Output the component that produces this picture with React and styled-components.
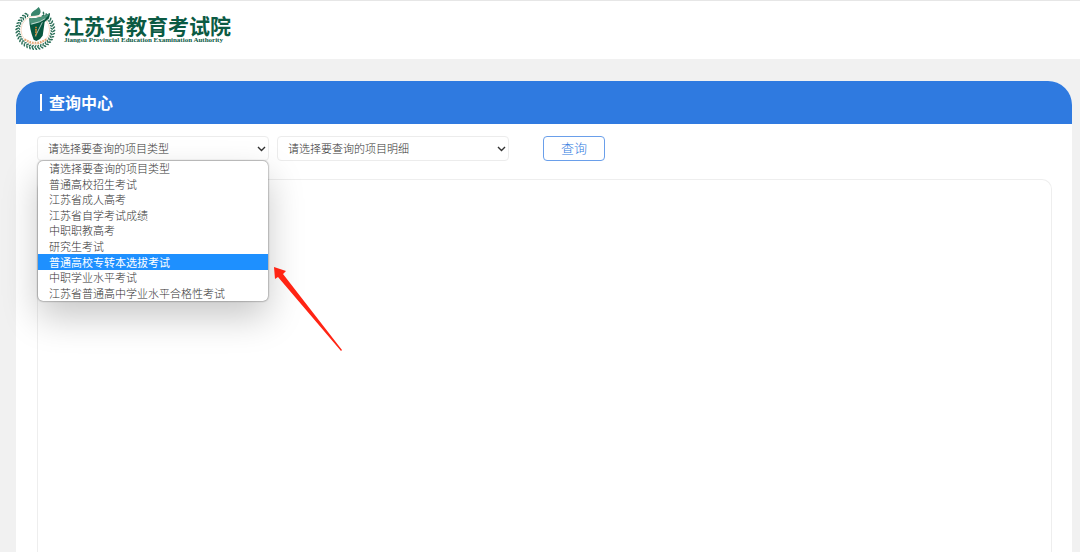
import React, { useState } from "react";
import styled, { createGlobalStyle } from "styled-components";

const GlobalStyle = createGlobalStyle`
  * {
    box-sizing: border-box;
  }

  body {
    margin: 0;
    background-color: #f1f1f1;
    font-family: "Noto Sans CJK SC", "Liberation Sans", sans-serif;
    font-weight: 300;
    color: #333;
  }
`;

const Page = styled.div`
  display: flex;
  flex-direction: column;
  min-height: 100vh;
`;

const Header = styled.header`
  display: flex;
  align-items: center;
  gap: 6px;
  height: 59px;
  padding: 0 15px 4px;
  border-top: 1px solid #e6e6e6;
  background-color: #fff;
`;

const Emblem = styled.svg`
  width: 42px;
  height: 44px;
`;

const Brand = styled.div`
  display: flex;
  flex-direction: column;
  padding-top: 2px;
  color: #0b5a43;
`;

const BrandName = styled.span`
  font-size: 21px;
  line-height: 22px;
  font-weight: 700;
`;

const BrandSub = styled.span`
  padding-left: 1px;
  font-family: "Liberation Serif", serif;
  font-size: 7px;
  line-height: 8px;
  font-weight: 700;
`;

const Panel = styled.main`
  flex: 1;
  display: flex;
  flex-direction: column;
  margin: 22px 8px 0 16px;
  border-radius: 24px 24px 0 0;
  background-color: #fff;
`;

const PanelHead = styled.div`
  display: flex;
  align-items: center;
  gap: 7px;
  height: 43px;
  padding: 0 24px;
  border-radius: 24px 24px 0 0;
  background-color: #2f7ae0;
  color: #fff;
`;

const Bar = styled.span`
  width: 2px;
  height: 17px;
  background-color: #fff;
`;

const Title = styled.h1`
  margin: 0;
  padding-bottom: 2px;
  font-size: 16px;
  line-height: 24px;
  font-weight: 700;
`;

const PanelBody = styled.div`
  flex: 1;
  display: flex;
  flex-direction: column;
  gap: 18px;
  padding: 12px 20px 0 21px;
`;

const Filters = styled.form`
  display: flex;
  gap: 8px;
`;

const Field = styled.div`
  position: relative;
  width: 232px;
`;

const Select = styled.select`
  display: block;
  appearance: none;
  width: 100%;
  height: 25px;
  padding: 0 24px 2px 10px;
  border: 1px solid #ececec;
  border-radius: 4px;
  background-color: #fff;
  color: #333;
  font-family: inherit;
  font-size: 11px;
  font-weight: 300;
  outline: none;
`;

const Chevron = styled.svg`
  position: absolute;
  top: 9px;
  right: 3px;
  width: 9px;
  height: 8px;
  pointer-events: none;
`;

const Options = styled.ul`
  position: absolute;
  z-index: 1;
  top: 25px;
  left: 1px;
  right: 1px;
  display: grid;
  grid-auto-rows: 1fr;
  height: 140px;
  margin: 0;
  padding: 0;
  overflow: hidden;
  list-style: none;
  border-radius: 5px;
  background-color: #fff;
  box-shadow: 0 0 2px rgba(0, 0, 0, 0.7), 0 16px 36px rgba(0, 0, 0, 0.22);
`;

const Option = styled.li`
  display: flex;
  align-items: center;
  padding: 0 11px;
  font-size: 11px;
  line-height: 15px;
  font-weight: ${(props) => (props.$active ? 400 : 300)};
  color: ${(props) => (props.$active ? "#fff" : "#333")};
  background-color: ${(props) => (props.$active ? "#1e90ff" : "transparent")};
  cursor: default;
`;

const Pointer = styled.svg`
  position: absolute;
  z-index: 2;
  top: 130px;
  left: 236px;
  width: 70px;
  height: 86px;
  pointer-events: none;
`;

const SearchButton = styled.button`
  width: 62px;
  height: 25px;
  margin-left: 26px;
  padding: 0 0 1px;
  border: 1px solid #6a9fea;
  border-radius: 4px;
  background-color: #fff;
  color: #2f7ae0;
  font-family: inherit;
  font-size: 13px;
  font-weight: 300;
  line-height: 22px;
  cursor: pointer;
`;

const Results = styled.section`
  flex: 1;
  border: 1px solid #eee;
  border-bottom: 0;
  border-radius: 10px 10px 0 0;
`;

const types = [
  "请选择要查询的项目类型",
  "普通高校招生考试",
  "江苏省成人高考",
  "江苏省自学考试成绩",
  "中职职教高考",
  "研究生考试",
  "普通高校专转本选拔考试",
  "中职学业水平考试",
  "江苏省普通高中学业水平合格性考试",
];

// wreath leaves run clockwise and leave the top open for the torch
const leaves = Array.from({ length: 33 }, (_, i) => -62 + i * 9.5);

const Logo = () => (
  <Emblem viewBox="0 0 126 132" aria-hidden="true">
    {leaves.map((a) => (
      <g key={a} transform={`rotate(${a} 61 72)`} fill="#2b7059">
        <ellipse cx="117" cy="70" rx="5" ry="2.4" transform="rotate(-38 117 70)" />
        <ellipse cx="110" cy="72" rx="5" ry="2.2" transform="rotate(38 110 72)" />
      </g>
    ))}
    <circle cx="61" cy="72" r="45" fill="#fff" />
    <circle cx="61" cy="72" r="43" fill="none" stroke="#edb78e" strokeWidth="1.5" />
    <path d="M29 100Q61 121 94 100" fill="none" stroke="#d9823f" strokeWidth="6" strokeDasharray="5 3" opacity="0.7" />
    <path d="M48 30C46 16 61 15 71 3C79 13 78 21 72 27Q60 30 48 30Z" fill="#39856c" />
    <path d="M43 37Q74 39 105 21Q106 36 89 48L83 89Q78 99 64 105L56 101Q43 71 43 37Z" fill="#07573f" />
    <path d="M43 37Q74 39 105 21Q93 45 47 57Z" fill="#4c947b" />
    <path d="M49 54Q77 49 91 38M82 49L61 91" fill="none" stroke="#fff" strokeWidth="2" />
    <path d="M63 62V91" stroke="#dd8a35" strokeWidth="5" strokeDasharray="5 2" />
  </Emblem>
);

const Arrow = () => (
  <Chevron viewBox="0 0 9 8" aria-hidden="true">
    <path d="M1 2L4.5 5.5L8 2" fill="none" stroke="#333" strokeWidth="1.4" />
  </Chevron>
);

const App = () => {
  const [active, setActive] = useState(6);

  return (
    <Page>
      <GlobalStyle />
      <Header>
        <Logo />
        <Brand>
          <BrandName>江苏省教育考试院</BrandName>
          <BrandSub>Jiangsu Provincial Education Examination Authority</BrandSub>
        </Brand>
      </Header>
      <Panel>
        <PanelHead>
          <Bar />
          <Title>查询中心</Title>
        </PanelHead>
        <PanelBody>
          <Filters onSubmit={(e) => e.preventDefault()}>
            <Field>
              <Select aria-label="项目类型">
                <option>请选择要查询的项目类型</option>
              </Select>
              <Arrow />
              <Options role="listbox" aria-label="项目类型">
                {types.map((name, i) => (
                  <Option
                    key={name}
                    role="option"
                    aria-selected={i === active}
                    $active={i === active}
                    onMouseEnter={() => setActive(i)}
                  >
                    {name}
                  </Option>
                ))}
              </Options>
              <Pointer viewBox="0 0 70 86" aria-hidden="true">
                <path d="M1 1L13 5L10 8L69 84L68 85L5 11L2 13Z" fill="#ff2414" />
              </Pointer>
            </Field>
            <Field>
              <Select aria-label="项目明细">
                <option>请选择要查询的项目明细</option>
              </Select>
              <Arrow />
            </Field>
            <SearchButton type="submit">查询</SearchButton>
          </Filters>
          <Results />
        </PanelBody>
      </Panel>
    </Page>
  );
};

export default App;
